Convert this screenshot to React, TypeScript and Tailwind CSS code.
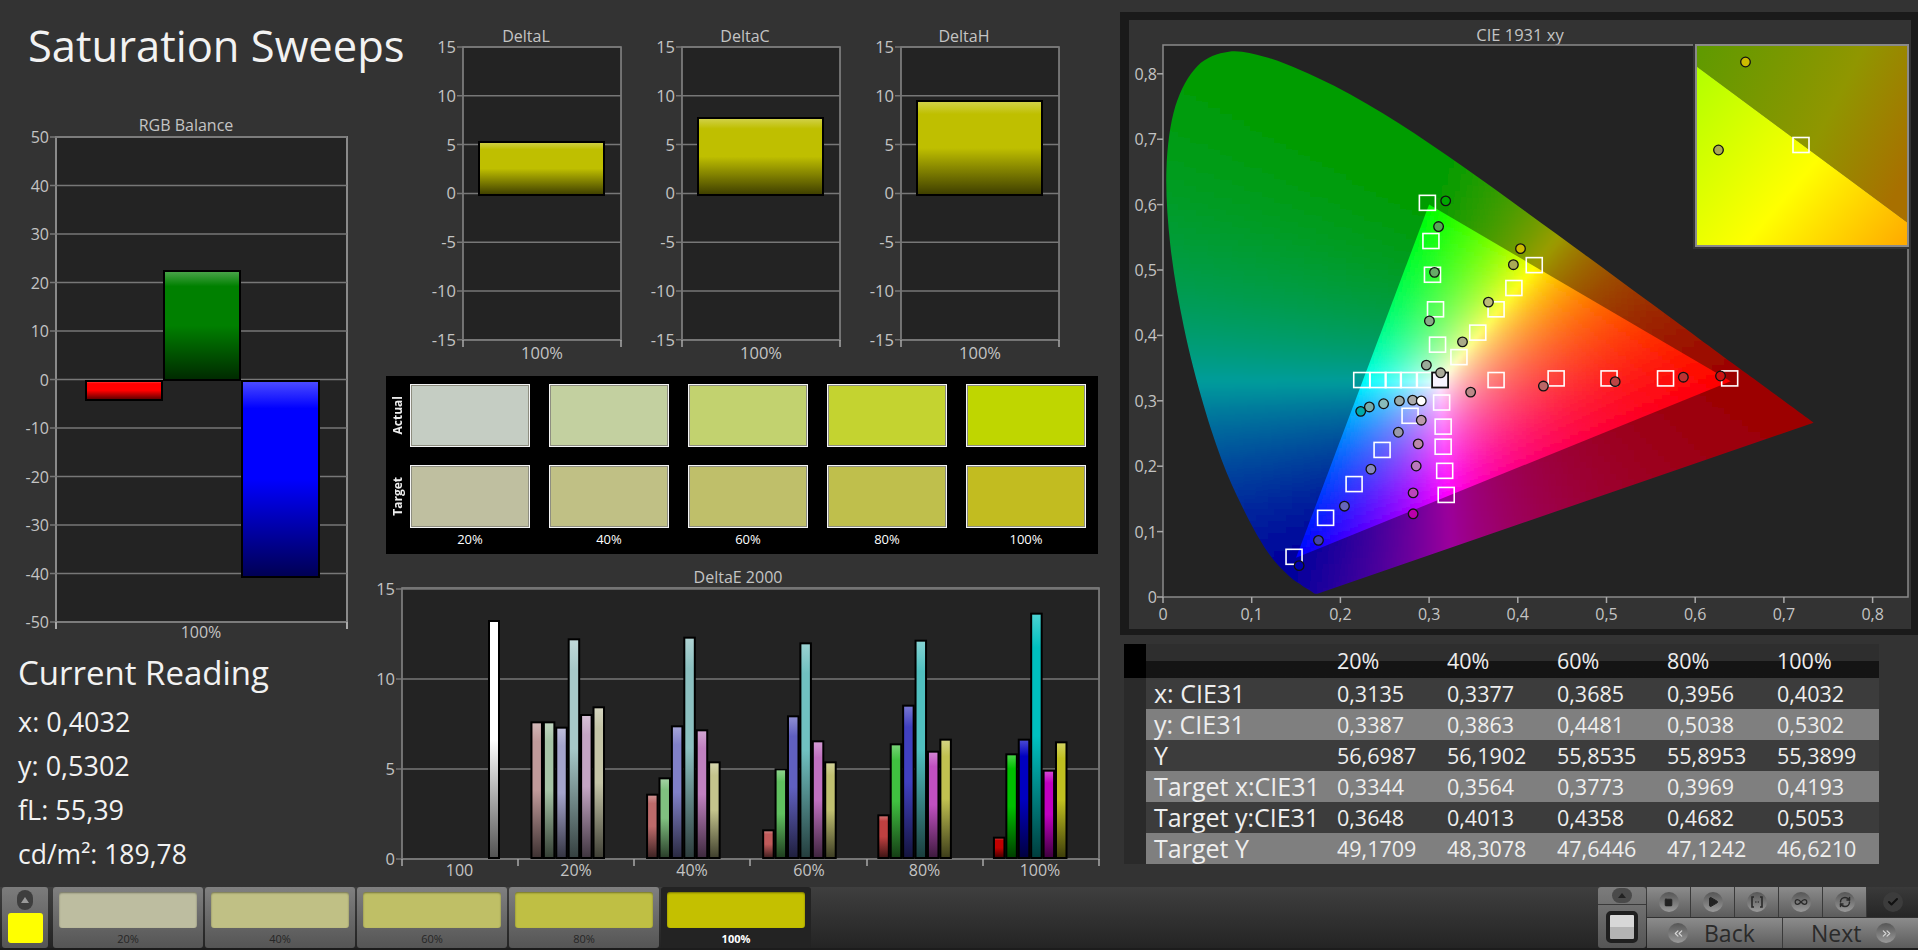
import { Check, ChevronsLeft, ChevronsRight, Infinity as InfinityIcon, Play, RefreshCw, Square } from "lucide-react"

// ------------------------------
// GAMUT DIAGRAM DATA
// ------------------------------
const locus = [
  [0.1741, 0.005], [0.1714, 0.0051], [0.1689, 0.0069], [0.1644, 0.0109], [0.1566, 0.0177], [0.144, 0.0297],
  [0.1241, 0.0578], [0.1096, 0.0868], [0.0913, 0.1327], [0.0687, 0.2007], [0.0454, 0.295], [0.0235, 0.4127],
  [0.0082, 0.5384], [0.0039, 0.6548], [0.0139, 0.7502], [0.0389, 0.812], [0.0743, 0.8338], [0.1142, 0.8262],
  [0.1547, 0.8059], [0.1929, 0.7816], [0.2296, 0.7543], [0.2658, 0.7243], [0.3016, 0.6923], [0.3373, 0.6589],
  [0.3731, 0.6245], [0.4087, 0.5896], [0.4441, 0.5547], [0.4788, 0.5202], [0.5125, 0.4866], [0.5448, 0.4544],
  [0.5752, 0.4242], [0.6029, 0.3965], [0.627, 0.3725], [0.6482, 0.3514], [0.6658, 0.334], [0.6915, 0.3083],
  [0.7079, 0.292], [0.719, 0.2809], [0.726, 0.274], [0.7334, 0.2666],
]
const gamut = [[0.3, 0.6], [0.64, 0.33], [0.15, 0.06]]

const px = (x: number) => 34 + 887 * x
const py = (y: number) => 577 - 654 * y
const toPoints = (list: number[][]) => list.map(([x, y]) => `${px(x)},${py(y)}`).join(" ")

// horseshoe as a smooth curve, the table alone is too angular at the top
function locusPath() {
  const pts = locus.map(([x, y]) => [px(x), py(y)])
  let d = `M${pts[0][0]} ${pts[0][1]}`
  for (let i = 0; i < pts.length - 1; i++) {
    const p0 = pts[Math.max(i - 1, 0)]
    const p1 = pts[i]
    const p2 = pts[i + 1]
    const p3 = pts[Math.min(i + 2, pts.length - 1)]
    d += ` C${p1[0] + (p2[0] - p0[0]) / 6} ${p1[1] + (p2[1] - p0[1]) / 6} ${p2[0] - (p3[0] - p1[0]) / 6} ${p2[1] - (p3[1] - p1[1]) / 6} ${p2[0]} ${p2[1]}`
  }
  return d + " Z"
}

function xyColor(x: number, y: number, dim: number) {
  const X = x / y
  const Z = (1 - x - y) / y
  const r = Math.max(0, 3.2406 * X - 1.5372 - 0.4986 * Z)
  const g = Math.max(0, -0.9689 * X + 1.8758 + 0.0415 * Z)
  const b = Math.max(0, 0.0557 * X - 0.204 + 1.057 * Z)
  const m = Math.max(r, g, b, 0.001)
  return `rgb(${Math.round((255 * dim * r) / m)},${Math.round((255 * dim * g) / m)},${Math.round((255 * dim * b) / m)})`
}

function buildCells(step: number, dim: number, x0: number, x1: number, y0: number, y1: number) {
  const cells: { x: number; y: number; fill: string }[] = []
  for (let sx = px(x0); sx < px(x1); sx += step) {
    for (let sy = py(y1); sy < py(y0); sy += step) {
      const x = (sx + step / 2 - 34) / 887
      const y = (577 - sy - step / 2) / 654
      cells.push({ x: sx, y: sy, fill: xyColor(x, Math.max(y, 0.002), dim) })
    }
  }
  return cells
}

const outerCells = buildCells(6, 0.62, -0.01, 0.75, -0.01, 0.85)
const innerCells = buildCells(4, 1, 0.13, 0.66, 0.04, 0.62)

// zoom-read marker spots, converted to panel px
const spot = (zx: number, zy: number) => [1120 + zx / 1.965 - 1129, 10 + zy / 2.489 - 20]

const targets = [
  [604, 480], [611, 575], [614, 659], [620, 745], [624, 833], [666, 864], [703, 803], [739, 745], [774, 692],
  [814, 635], [739, 921], [857, 917], [961, 917], [1072, 917], [1198, 917], [632, 977], [635, 1037], [635, 1087],
  [638, 1147], [641, 1207], [570, 1010], [515, 1095], [460, 1180], [404, 1264], [342, 1361], [600, 921],
  [567, 921], [537, 921], [507, 921], [475, 921],
]

const readings: [number, number, string][] = [
  [640, 475, "#00a800"], [626, 539, "#55a855"], [618, 653, "#66aa66"], [608, 774, "#88aa88"], [602, 884, "#99aa99"],
  [673, 826, "#aaaa88"], [724, 727, "#bbbb77"], [773, 634, "#aaaa55"], [787, 594, "#ccbb00"], [689, 951, "#bb8888"],
  [832, 936, "#bb6666"], [973, 925, "#bb4444"], [1107, 914, "#bb3333"], [1180, 911, "#cc1111"], [575, 971, "#aaaaaa"],
  [549, 973, "#99aaaa"], [518, 980, "#88bbbb"], [490, 988, "#77aaaa"], [473, 999, "#00aaaa"], [592, 1021, "#bb99aa"],
  [586, 1080, "#bb88aa"], [582, 1135, "#bb77bb"], [576, 1202, "#bb44bb"], [576, 1254, "#bb00aa"], [547, 1051, "#9999aa"],
  [493, 1143, "#8888bb"], [441, 1235, "#6666bb"], [390, 1320, "#4444aa"], [352, 1383, "#0000aa"],
  [592, 973, "#ffffff"], [630, 903, "#aaaa99"],
]

// ------------------------------
// BAR GRADIENT
// ------------------------------
function mix(hex: string, other: number, amount: number) {
  const n = parseInt(hex.slice(1), 16)
  const part = (v: number) => Math.round(v + (other - v) * amount)
  return `rgb(${part((n >> 16) & 255)},${part((n >> 8) & 255)},${part(n & 255)})`
}

function BarGradient({ id, color }: { id: string; color: string }) {
  return (
    <linearGradient id={id} x1="0" y1="0" x2="0" y2="1">
      <stop offset="0" stopColor={mix(color, 255, 0.3)} />
      <stop offset="0.14" stopColor={color} />
      <stop offset="0.5" stopColor={color} />
      <stop offset="1" stopColor={mix(color, 0, 0.68)} />
    </linearGradient>
  )
}

function ShadedBar({ x, y, w, h, id }: { x: number; y: number; w: number; h: number; id: string }) {
  return <rect x={x + 1} y={y + 1} width={w - 2} height={h - 2} fill={`url(#${id})`} stroke="#000" strokeWidth="2" />
}

// ------------------------------
// RGB BALANCE
// ------------------------------
function RgbBalance() {
  const rows = [50, 40, 30, 20, 10, 0, -10, -20, -30, -40, -50]
  return (
    <svg width="370" height="530" className="block">
      <defs>
        <BarGradient id="rgbR" color="#ff0000" />
        <BarGradient id="rgbG" color="#008000" />
        <BarGradient id="rgbB" color="#0000ff" />
      </defs>
      <text x="186" y="19" textAnchor="middle" fontSize="16" fill="#c4c4c4">RGB Balance</text>
      <rect x="56" y="25" width="291" height="485" fill="#232323" stroke="#8a8a8a" strokeWidth="2" />
      {rows.map((v, i) => {
        const y = 25 + i * 48.5
        return (
          <g key={v}>
            <line x1="50" x2="347" y1={y} y2={y} stroke="#777" strokeWidth="1.5" />
            <text x="49" y={y + 6} textAnchor="end" fontSize="16" fill="#c4c4c4">{v}</text>
          </g>
        )
      })}
      <line x1="56" x2="56" y1="510" y2="517" stroke="#aaa" strokeWidth="2" />
      <line x1="347" x2="347" y1="510" y2="517" stroke="#aaa" strokeWidth="2" />
      <ShadedBar x={85} y={268} w={78} h={21} id="rgbR" />
      <ShadedBar x={163} y={158} w={78} h={111} id="rgbG" />
      <ShadedBar x={241} y={268} w={79} h={198} id="rgbB" />
      <text x="201" y="526" textAnchor="middle" fontSize="16" fill="#c4c4c4">100%</text>
    </svg>
  )
}

// ------------------------------
// DELTA L / C / H
// ------------------------------
function DeltaChart({ title, top, left }: { title: string; top: number; left: number }) {
  const id = `delta${title}`
  const rows = [15, 10, 5, 0, -5, -10, -15]
  return (
    <svg width="219" height="342" className="block shrink-0">
      <defs>
        <BarGradient id={id} color="#bfbf00" />
      </defs>
      <text x="96" y="20" textAnchor="middle" fontSize="16" fill="#c4c4c4">{title}</text>
      <rect x="33" y="25" width="158" height="293" fill="#232323" stroke="#8a8a8a" strokeWidth="1.5" />
      {rows.map((v, i) => {
        const y = 25 + i * 48.8
        return (
          <g key={v}>
            <line x1="27" x2="191" y1={y} y2={y} stroke="#777" strokeWidth="1.5" />
            <text x="26" y={y + 6} textAnchor="end" fontSize="16.5" fill="#c4c4c4">{v}</text>
          </g>
        )
      })}
      <line x1="33" x2="33" y1="318" y2="325" stroke="#aaa" strokeWidth="1.5" />
      <line x1="191" x2="191" y1="318" y2="325" stroke="#aaa" strokeWidth="1.5" />
      <ShadedBar x={left} y={top + 6} w={127} h={168 - top} id={id} />
      <text x="112" y="337" textAnchor="middle" fontSize="16.5" fill="#c4c4c4">100%</text>
    </svg>
  )
}

// ------------------------------
// DELTA E 2000
// ------------------------------
const groupLefts = [340, 585, 831, 1075, 1320]
const groupTops = [
  [1054, 1054, 1070, 805, 1032, 1009],
  [1271, 1222, 1066, 800, 1078, 1174],
  [1378, 1195, 1036, 817, 1111, 1174],
  [1333, 1120, 1004, 809, 1142, 1106],
  [1400, 1150, 1106, 728, 1199, 1114],
]
const groupColors = [
  ["#c09a9a", "#a6c4a6", "#a4a4cc", "#a6c8c8", "#c4a6c4", "#c4c4a6"],
  ["#bd6a6a", "#80c080", "#8080c8", "#8cc0c0", "#c080c0", "#c4c48c"],
  ["#c05a5a", "#60c060", "#6060c0", "#70c0c0", "#c070c0", "#c0c070"],
  ["#c04040", "#40c040", "#4040c0", "#50c0c0", "#c050c0", "#c0c050"],
  ["#c00000", "#00c000", "#0000c0", "#00c0c0", "#c000c0", "#c0c020"],
]

function DeltaEChart() {
  const tx = (z: number) => z / 2.119
  const ty = (z: number) => z / 3 + 370 - 565
  const ticks = [32, 148, 264, 380, 497, 613, 729]
  const labels = [["100", 89.5], ["20%", 206], ["40%", 322], ["60%", 439], ["80%", 554.5], ["100%", 670]] as const
  return (
    <svg width="750" height="315" className="block">
      <defs>
        <BarGradient id="white" color="#ffffff" />
        {groupColors.flat().map((c, i) => (
          <BarGradient key={i} id={`de${i}`} color={c} />
        ))}
      </defs>
      <text x="368" y="18" textAnchor="middle" fontSize="16" fill="#c4c4c4">DeltaE 2000</text>
      <rect x="32" y="23" width="697" height="271" fill="#232323" stroke="#8a8a8a" strokeWidth="1.5" />
      {[15, 10, 5, 0].map((v, i) => {
        const y = 24 + i * 90
        return (
          <g key={v}>
            <line x1="26" x2="729" y1={y} y2={y} stroke="#777" strokeWidth="1.5" />
            <text x="25" y={y + 6} textAnchor="end" fontSize="16.5" fill="#c4c4c4">{v}</text>
          </g>
        )
      })}
      {ticks.map((x) => (
        <line key={x} x1={x} x2={x} y1="294" y2="301" stroke="#aaa" strokeWidth="1.5" />
      ))}
      <ShadedBar x={118} y={55} w={12} h={239} id="white" />
      {groupLefts.map((left, g) =>
        groupTops[g].map((top, i) => {
          const x = tx(left + i * 26.3)
          const y = ty(top)
          return <ShadedBar key={`${g}${i}`} x={x} y={y} w={12.5} h={294 - y} id={`de${g * 6 + i}`} />
        }),
      )}
      {labels.map(([t, x]) => (
        <text key={t} x={x} y="311" textAnchor="middle" fontSize="16" fill="#c4c4c4">{t}</text>
      ))}
    </svg>
  )
}

// ------------------------------
// CIE 1931 xy
// ------------------------------
function CieDiagram() {
  const ys = [0, 0.1, 0.2, 0.3, 0.4, 0.5, 0.6, 0.7, 0.8]
  const [wx, wy] = spot(629, 921)
  return (
    <svg width="782" height="609" className="block">
      <defs>
        <clipPath id="locusClip">
          <path d={locusPath()} />
        </clipPath>
        <clipPath id="gamutClip">
          <polygon points={toPoints(gamut)} />
        </clipPath>
        <filter id="soft6" x="-5%" y="-5%" width="110%" height="110%">
          <feGaussianBlur stdDeviation="3" />
        </filter>
        <filter id="soft4" x="-5%" y="-5%" width="110%" height="110%">
          <feGaussianBlur stdDeviation="1.5" />
        </filter>
        <linearGradient id="insetLow" gradientUnits="userSpaceOnUse" x1="567" y1="46" x2="779" y2="226">
          <stop offset="0" stopColor="#b0ff00" />
          <stop offset="0.55" stopColor="#ffff00" />
          <stop offset="1" stopColor="#ffa800" />
        </linearGradient>
        <linearGradient id="insetHigh" gradientUnits="userSpaceOnUse" x1="567" y1="40" x2="779" y2="150">
          <stop offset="0" stopColor="#609a00" />
          <stop offset="0.6" stopColor="#909600" />
          <stop offset="1" stopColor="#a87000" />
        </linearGradient>
      </defs>
      <text x="391" y="21" textAnchor="middle" fontSize="16.5" fill="#c4c4c4">CIE 1931 xy</text>
      <rect x="34" y="25" width="745" height="552" fill="#232323" stroke="#8a8a8a" strokeWidth="1.5" />
      <g clipPath="url(#locusClip)">
        <g filter="url(#soft6)">
          {outerCells.map((c, i) => (
            <rect key={i} x={c.x} y={c.y} width="6.5" height="6.5" fill={c.fill} />
          ))}
        </g>
      </g>
      <g clipPath="url(#gamutClip)">
        <g filter="url(#soft4)">
          {innerCells.map((c, i) => (
            <rect key={i} x={c.x} y={c.y} width="4.5" height="4.5" fill={c.fill} />
          ))}
        </g>
      </g>
      {ys.map((v, i) => (
        <g key={v}>
          <line x1="28" x2="34" y1={py(v)} y2={py(v)} stroke="#aaa" strokeWidth="1.5" />
          <text x="28" y={py(v) + 6} textAnchor="end" fontSize="16" fill="#c4c4c4">{i === 0 ? "0" : String(v).replace(".", ",")}</text>
          <line x1={px(v)} x2={px(v)} y1="577" y2="583" stroke="#aaa" strokeWidth="1.5" />
          <text x={px(v)} y="600" textAnchor="middle" fontSize="16" fill="#c4c4c4">{i === 0 ? "0" : String(v).replace(".", ",")}</text>
        </g>
      ))}
      {targets.map(([zx, zy]) => {
        const [x, y] = spot(zx, zy)
        return <rect key={`${zx}-${zy}`} x={x - 8} y={y - 7.5} width="16" height="15" fill="none" stroke="#fff" strokeWidth="1.6" />
      })}
      <rect x={wx - 8} y={wy - 7.5} width="16" height="15" fill="#f8f4ff" stroke="#111" strokeWidth="1.8" />
      {readings.map(([zx, zy, fill]) => {
        const [x, y] = spot(zx, zy)
        return <circle key={`${zx}-${zy}`} cx={x} cy={y} r="4.8" fill={fill} stroke="#111" strokeWidth="1.3" />
      })}

      {/* inset zoom around the current reading */}
      <rect x="564" y="22" width="218" height="207" fill="#333" />
      <polygon points="567,25 779,25 779,203 567,46" fill="url(#insetHigh)" />
      <polygon points="567,46 779,203 779,226 567,226" fill="url(#insetLow)" />
      <rect x="567" y="25" width="212" height="201" fill="none" stroke="#8a8a8a" strokeWidth="2" />
      <rect x="664" y="117.5" width="16" height="15" fill="none" stroke="#fff" strokeWidth="1.6" />
      <circle cx="616.5" cy="42" r="4.8" fill="#ccbb00" stroke="#111" strokeWidth="1.3" />
      <circle cx="589.5" cy="130" r="4.8" fill="#aaaa55" stroke="#111" strokeWidth="1.3" />
    </svg>
  )
}

// ------------------------------
// READINGS TABLE
// ------------------------------
const tableRows = [
  ["x: CIE31", "0,3135", "0,3377", "0,3685", "0,3956", "0,4032"],
  ["y: CIE31", "0,3387", "0,3863", "0,4481", "0,5038", "0,5302"],
  ["Y", "56,6987", "56,1902", "55,8535", "55,8953", "55,3899"],
  ["Target x:CIE31", "0,3344", "0,3564", "0,3773", "0,3969", "0,4193"],
  ["Target y:CIE31", "0,3648", "0,4013", "0,4358", "0,4682", "0,5053"],
  ["Target Y", "49,1709", "48,3078", "47,6446", "47,1242", "46,6210"],
]

function ReadingsTable() {
  return (
    <div className="ml-[4px] mt-[9px] w-[755px] text-[21.5px] text-[#eeeeee]">
      <div className="flex h-[34px]">
        <div className="w-[22px] bg-black" />
        <div className="grid flex-1 grid-cols-[191px_110px_110px_110px_110px_102px] items-center bg-linear-to-b from-[#2e2e2e] from-50% to-[#141414] to-50%">
          <div />
          {["20%", "40%", "60%", "80%", "100%"].map((h) => (
            <div key={h}>{h}</div>
          ))}
        </div>
      </div>
      {tableRows.map((row, i) => (
        <div key={row[0]} className="flex h-[31px]">
          <div className="w-[22px] bg-[#2a2a2a]" />
          <div className={`grid flex-1 grid-cols-[191px_110px_110px_110px_110px_102px] items-center leading-[29px] ${i % 2 === 0 ? "bg-[#3c3c3c]" : "bg-[#7f7f7f]"}`}>
            {row.map((cell, c) => (
              <div key={c} className={c === 0 ? "whitespace-nowrap pl-[8px] text-[25px]" : "whitespace-nowrap"}>
                {cell}
              </div>
            ))}
          </div>
        </div>
      ))}
    </div>
  )
}

// ------------------------------
// SWATCHES
// ------------------------------
const actual = ["#c5cdc3", "#c3d0a0", "#c2d26f", "#c4d330", "#bfd600"]
const target = ["#bfbfa0", "#c0c085", "#bfbf6a", "#bfbf4c", "#c2bc20"]

function SwatchRow({ label, colors }: { label: string; colors: string[] }) {
  return (
    <div className="flex h-[63px]">
      <div className="flex w-[24px] items-center justify-center">
        <span className="rotate-180 text-[12px] font-bold text-[#eeeeee] [writing-mode:vertical-rl]">{label}</span>
      </div>
      <div className="flex gap-[19px]">
        {colors.map((c) => (
          <div key={c} className="w-[120px] border border-[#f4f4f4] shadow-[inset_0_0_0_1px_#8e8e80]" style={{ backgroundColor: c }} />
        ))}
      </div>
    </div>
  )
}

function SwatchPanel() {
  return (
    <div className="ml-[16px] mt-[12px] h-[178px] w-[712px] bg-black pt-[8px]">
      <SwatchRow label="Actual" colors={actual} />
      <div className="mt-[18px]">
        <SwatchRow label="Target" colors={target} />
      </div>
      <div className="ml-[24px] mt-[2px] flex gap-[19px] text-[13px] font-medium text-white">
        {["20%", "40%", "60%", "80%", "100%"].map((t) => (
          <div key={t} className="w-[120px] text-center">{t}</div>
        ))}
      </div>
    </div>
  )
}

// ------------------------------
// BOTTOM BAR
// ------------------------------
const barSwatches = [
  ["20%", "#bdbda0"],
  ["40%", "#c0c085"],
  ["60%", "#bfbf66"],
  ["80%", "#bfbf44"],
  ["100%", "#c4c000"],
]

function RoundIcon({ children, size = "w-[20px] h-[20px]" }: { children?: React.ReactNode; size?: string }) {
  return (
    <div className={`flex items-center justify-center rounded-full bg-linear-to-b from-[#565656] to-[#9a9a9a] ${size}`}>
      {children}
    </div>
  )
}

function ToolButton({ children }: { children: React.ReactNode }) {
  return (
    <div className="flex w-[44px] items-center justify-center border-r border-[#3a3a3a] bg-linear-to-b from-[#8c8c8c] to-[#5c5c5c]">
      <RoundIcon>{children}</RoundIcon>
    </div>
  )
}

function BottomBar() {
  return (
    <div className="flex h-[63px] justify-between border-b-2 border-[#1c1c1c] bg-linear-to-b from-[#3f3f3f] to-[#242424]">
      <div className="flex gap-[2px] pl-[2px]">
        <div className="flex w-[46px] flex-col items-center rounded-[3px] bg-linear-to-b from-[#7c7c7c] to-[#555555]">
          <div className="mt-[3px] flex h-[20px] w-[16px] items-center justify-center rounded-full bg-[#3e3e3e]">
            <div className="h-0 w-0 border-x-[4px] border-b-[6px] border-x-transparent border-b-[#999999]" />
          </div>
          <div className="mt-[3px] h-[30px] w-[35px] rounded-[3px] bg-[#ffff00]" />
        </div>
        <div className="ml-[3px] flex gap-[2px]">
          {barSwatches.map(([label, color], i) => (
            <div
              key={label}
              className={`flex w-[150px] flex-col rounded-[3px] px-[6px] pt-[5px] ${i === 4 ? "bg-[#232323]" : "bg-linear-to-b from-[#808080] to-[#555555]"}`}
            >
              <div className="h-[36px] rounded-[3px] shadow-[inset_0_1px_2px_rgba(0,0,0,0.4)]" style={{ backgroundColor: color }} />
              <div className={`mt-[3px] text-center text-[11px] ${i === 4 ? "font-bold text-white" : "font-medium text-[#262626]"}`}>{label}</div>
            </div>
          ))}
        </div>
      </div>
      <div className="flex">
        <div className="flex w-[48px] flex-col rounded-[3px] bg-linear-to-b from-[#7c7c7c] to-[#555555]">
          <div className="flex h-[18px] items-center justify-center border-b border-[#3a3a3a]">
            <div className="flex h-[15px] w-[20px] items-center justify-center rounded-full bg-[#4a4a4a]">
              <div className="h-0 w-0 border-x-[4px] border-b-[5px] border-x-transparent border-b-[#222222]" />
            </div>
          </div>
          <div className="flex flex-1 items-center justify-center">
            <div className="h-[32px] w-[32px] rounded-[5px] border-[4px] border-[#1f1f1f] bg-linear-to-b from-[#d8d8d8] from-50% to-[#b4b4b4] to-50%" />
          </div>
        </div>
        <div className="ml-[1px] flex w-[271px] flex-col">
          <div className="flex h-[30px]">
            <ToolButton>
              <Square className="h-[9px] w-[9px] fill-[#222222] text-[#222222]" />
            </ToolButton>
            <ToolButton>
              <Play className="h-[12px] w-[12px] fill-[#222222] text-[#222222]" />
            </ToolButton>
            <ToolButton>
              <svg width="14" height="14" viewBox="0 0 14 14" fill="none" stroke="#2a2a2a" strokeWidth="1.6">
                <path d="M4 2H2v10h2M10 2h2v10h-2" />
                <path d="M5.5 7h0.8M7.8 7h0.8" strokeWidth="2" />
              </svg>
            </ToolButton>
            <ToolButton>
              <InfinityIcon className="h-[14px] w-[14px] text-[#2a2a2a]" />
            </ToolButton>
            <ToolButton>
              <RefreshCw className="h-[12px] w-[12px] text-[#2a2a2a]" strokeWidth={3} />
            </ToolButton>
            <div className="flex flex-1 items-center justify-center bg-linear-to-b from-[#3a3a3a] to-[#262626]">
              <div className="flex h-[20px] w-[20px] items-center justify-center rounded-full bg-[#3c3c3c]">
                <Check className="h-[12px] w-[12px] text-[#111111]" strokeWidth={4} />
              </div>
            </div>
          </div>
          <div className="mt-[1px] flex h-[30px] text-[23px] leading-[30px] text-[#2a2a2a]">
            <div className="flex w-[136px] items-center border-r border-[#3a3a3a] bg-linear-to-b from-[#8c8c8c] to-[#5c5c5c] pl-[21px]">
              <RoundIcon>
                <ChevronsLeft className="h-[13px] w-[13px] text-[#d8d8d8]" />
              </RoundIcon>
              <span className="ml-[16px]">Back</span>
            </div>
            <div className="flex flex-1 items-center bg-linear-to-b from-[#8c8c8c] to-[#5c5c5c] pl-[28px]">
              <span>Next</span>
              <div className="ml-[15px]">
                <RoundIcon>
                  <ChevronsRight className="h-[13px] w-[13px] text-[#d8d8d8]" />
                </RoundIcon>
              </div>
            </div>
          </div>
        </div>
      </div>
    </div>
  )
}

export default function App() {
  return (
    <div className="flex h-[950px] w-[1918px] flex-col overflow-hidden bg-[#333333] font-['Open_Sans',sans-serif]">
      <div className="flex h-[887px]">
        {/* LEFT COLUMN */}
        <div className="w-[370px] shrink-0">
          <h1 className="ml-[28px] mt-[18px] h-[56px] whitespace-nowrap text-[43.5px] font-normal leading-[56px] text-[#f2f2f2]">
            Saturation Sweeps
          </h1>
          <div className="mt-[38px]">
            <RgbBalance />
          </div>
          <div className="ml-[18px] mt-[11px] text-[#f2f2f2]">
            <div className="text-[33px] leading-[40px]">Current Reading</div>
            <div className="mt-[7px] text-[27px] leading-[44px]">x: 0,4032</div>
            <div className="text-[27px] leading-[44px]">y: 0,5302</div>
            <div className="text-[27px] leading-[44px]">fL: 55,39</div>
            <div className="text-[26.5px] leading-[44px]">cd/m²: 189,78</div>
          </div>
        </div>

        {/* MIDDLE COLUMN */}
        <div className="w-[750px] shrink-0">
          <div className="mt-[22px] flex pl-[60px]">
            <DeltaChart title="DeltaL" top={113} left={48} />
            <DeltaChart title="DeltaC" top={89} left={48} />
            <DeltaChart title="DeltaH" top={72} left={48} />
          </div>
          <SwatchPanel />
          <div className="mt-[11px]">
            <DeltaEChart />
          </div>
        </div>

        {/* RIGHT COLUMN */}
        <div className="flex-1">
          <div className="mt-[12px] h-[623px] bg-[#1a1a1a] pl-[9px] pt-[8px]">
            <div className="h-[609px] w-[782px] bg-[#333333]">
              <CieDiagram />
            </div>
          </div>
          <ReadingsTable />
        </div>
      </div>
      <BottomBar />
    </div>
  )
}
